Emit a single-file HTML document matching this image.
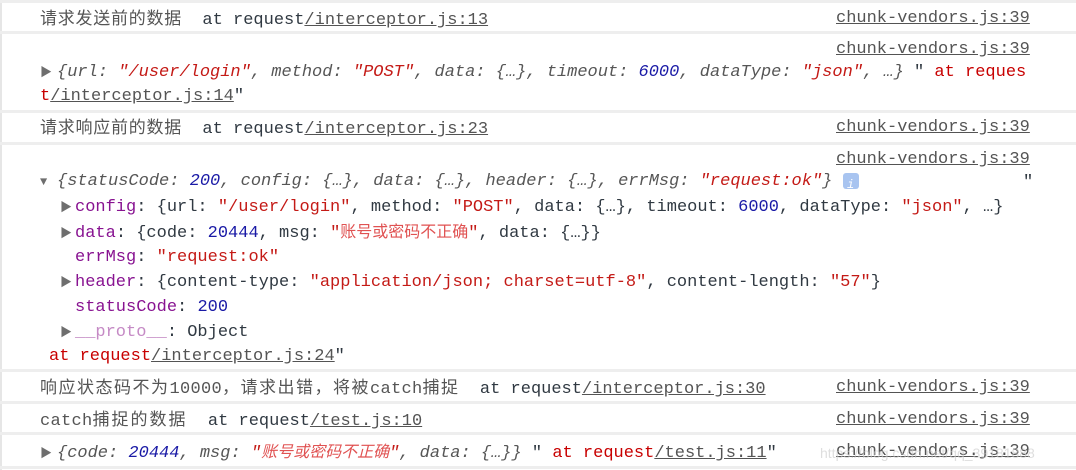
<!DOCTYPE html>
<html><head><meta charset="utf-8"><style>
body{margin:0;width:1076px;height:470px;background:#fff;position:relative;overflow:hidden;font-family:"Liberation Mono","Noto Sans CJK SC",monospace;font-size:17px;color:#303942}
.l{position:absolute;height:25px;line-height:25px;white-space:pre}
.l span{line-height:25px}
.sep{position:absolute;left:0;width:1076px;height:3px;background:#eeeeee}
.cn{font-family:"Noto Sans CJK SC","WenQuanYi Zen Hei",sans-serif;color:#555;font-size:17px;letter-spacing:0.75px}
.m{font-family:"Liberation Mono",monospace;letter-spacing:0}
.lk{color:#545454;text-decoration:underline}
.r{color:#c41a16}
.rr{color:#c80000}
.b{color:#1a1aa6}
.k{color:#881391}
.i{font-style:italic;color:#565656}
.cr{color:#e05252;font-family:"Noto Sans CJK SC",sans-serif;font-size:16px}
.ar{display:inline-block;width:17px;color:#6e6e6e;font-size:12px;font-style:normal}
.ar2{display:inline-block;width:15px;color:#6e6e6e;font-size:12px}
.src{position:absolute;left:836px;height:25px;line-height:25px;color:#545454;text-decoration:underline;white-space:pre}
.info{display:inline-block;width:16px;height:16px;background:#a8c4f0;border-radius:3px;color:#fff;font-size:12px;line-height:16px;text-align:center;vertical-align:middle;font-style:italic}
</style></head><body>
<div style="position:absolute;left:0;top:0;width:2px;height:470px;background:#e6e6e6"></div>
<div class="sep" style="top:0"></div>
<div class="l" style="left:40px;top:4px"><span class="cn">请求发送前的数据</span>  at request<span class="lk">/interceptor.js:13</span></div>
<div class="src" style="top:6px">chunk-vendors.js:39</div>
<div class="sep" style="top:31px"></div>
<div class="src" style="top:37px">chunk-vendors.js:39</div>
<div class="l" style="left:40px;top:60px"><span class="ar">▶</span><span class="i">{url: <span class="r">"/user/login"</span>, method: <span class="r">"POST"</span>, data: {…}, timeout: <span class="b">6000</span>, dataType: <span class="r">"json"</span>, …}</span> " <span class="rr">at reques</span></div>
<div class="l" style="left:40px;top:84px"><span class="rr">t</span><span class="lk">/interceptor.js:14</span>"</div>
<div class="sep" style="top:110px"></div>
<div class="l" style="left:40px;top:113px"><span class="cn">请求响应前的数据</span>  at request<span class="lk">/interceptor.js:23</span></div>
<div class="src" style="top:115px">chunk-vendors.js:39</div>
<div class="sep" style="top:142px"></div>
<div class="src" style="top:147px">chunk-vendors.js:39</div>
<div class="l" style="left:40px;top:169px"><span class="ar">▼</span><span class="i">{statusCode: <span class="b">200</span>, config: {…}, data: {…}, header: {…}, errMsg: <span class="r">"request:ok"</span>}</span> <span class="info">i</span></div>
<div class="l" style="left:1023px;top:170px">"</div>
<div class="l" style="left:60px;top:195px"><span class="ar2">▶</span><span class="k">config</span>: {url: <span class="r">"/user/login"</span>, method: <span class="r">"POST"</span>, data: {…}, timeout: <span class="b">6000</span>, dataType: <span class="r">"json"</span>, …}</div>
<div class="l" style="left:60px;top:218px"><span class="ar2">▶</span><span class="k">data</span>: {code: <span class="b">20444</span>, msg: <span class="r">"</span><span class="cr">账号或密码不正确</span><span class="r">"</span>, data: {…}}</div>
<div class="l" style="left:75px;top:245px"><span class="k">errMsg</span>: <span class="r">"request:ok"</span></div>
<div class="l" style="left:60px;top:270px"><span class="ar2">▶</span><span class="k">header</span>: {content-type: <span class="r">"application/json; charset=utf-8"</span>, content-length: <span class="r">"57"</span>}</div>
<div class="l" style="left:75px;top:295px"><span class="k">statusCode</span>: <span class="b">200</span></div>
<div class="l" style="left:60px;top:320px"><span class="ar2">▶</span><span style="color:#c58ac5">__proto__</span>: Object</div>
<div class="l" style="left:49px;top:344px"><span class="rr">at request</span><span class="lk">/interceptor.js:24</span>"</div>
<div class="sep" style="top:369px"></div>
<div class="l" style="left:40px;top:373px"><span class="cn" style="letter-spacing:1.5px">响应状态码不为<span class="m" style="letter-spacing:0.3px">10000</span>，请求出错，将被<span class="m" style="letter-spacing:0.3px">catch</span>捕捉</span>  at request<span class="lk">/interceptor.js:30</span></div>
<div class="src" style="top:375px">chunk-vendors.js:39</div>
<div class="sep" style="top:401px"></div>
<div class="l" style="left:40px;top:405px"><span class="cn" style="letter-spacing:2px"><span class="m" style="letter-spacing:0.3px">catch</span>捕捉的数据</span>  at request<span class="lk">/test.js:10</span></div>
<div class="src" style="top:407px">chunk-vendors.js:39</div>
<div class="sep" style="top:432px"></div>
<div class="l" style="left:40px;top:438px"><span class="ar">▶</span><span class="i">{code: <span class="b">20444</span>, msg: <span class="r">"</span><span class="cr">账号或密码不正确</span><span class="r">"</span>, data: {…}}</span> " <span class="rr">at request</span><span class="lk">/test.js:11</span>"</div>
<div class="src" style="top:439px">chunk-vendors.js:39</div>
<div class="l" style="left:820px;top:441px;color:rgba(200,200,200,0.6);font-family:'Liberation Sans',sans-serif;font-size:14px">https://blog.csdn.net/qq_39181888</div>
<div class="sep" style="top:466px"></div>
</body></html>
